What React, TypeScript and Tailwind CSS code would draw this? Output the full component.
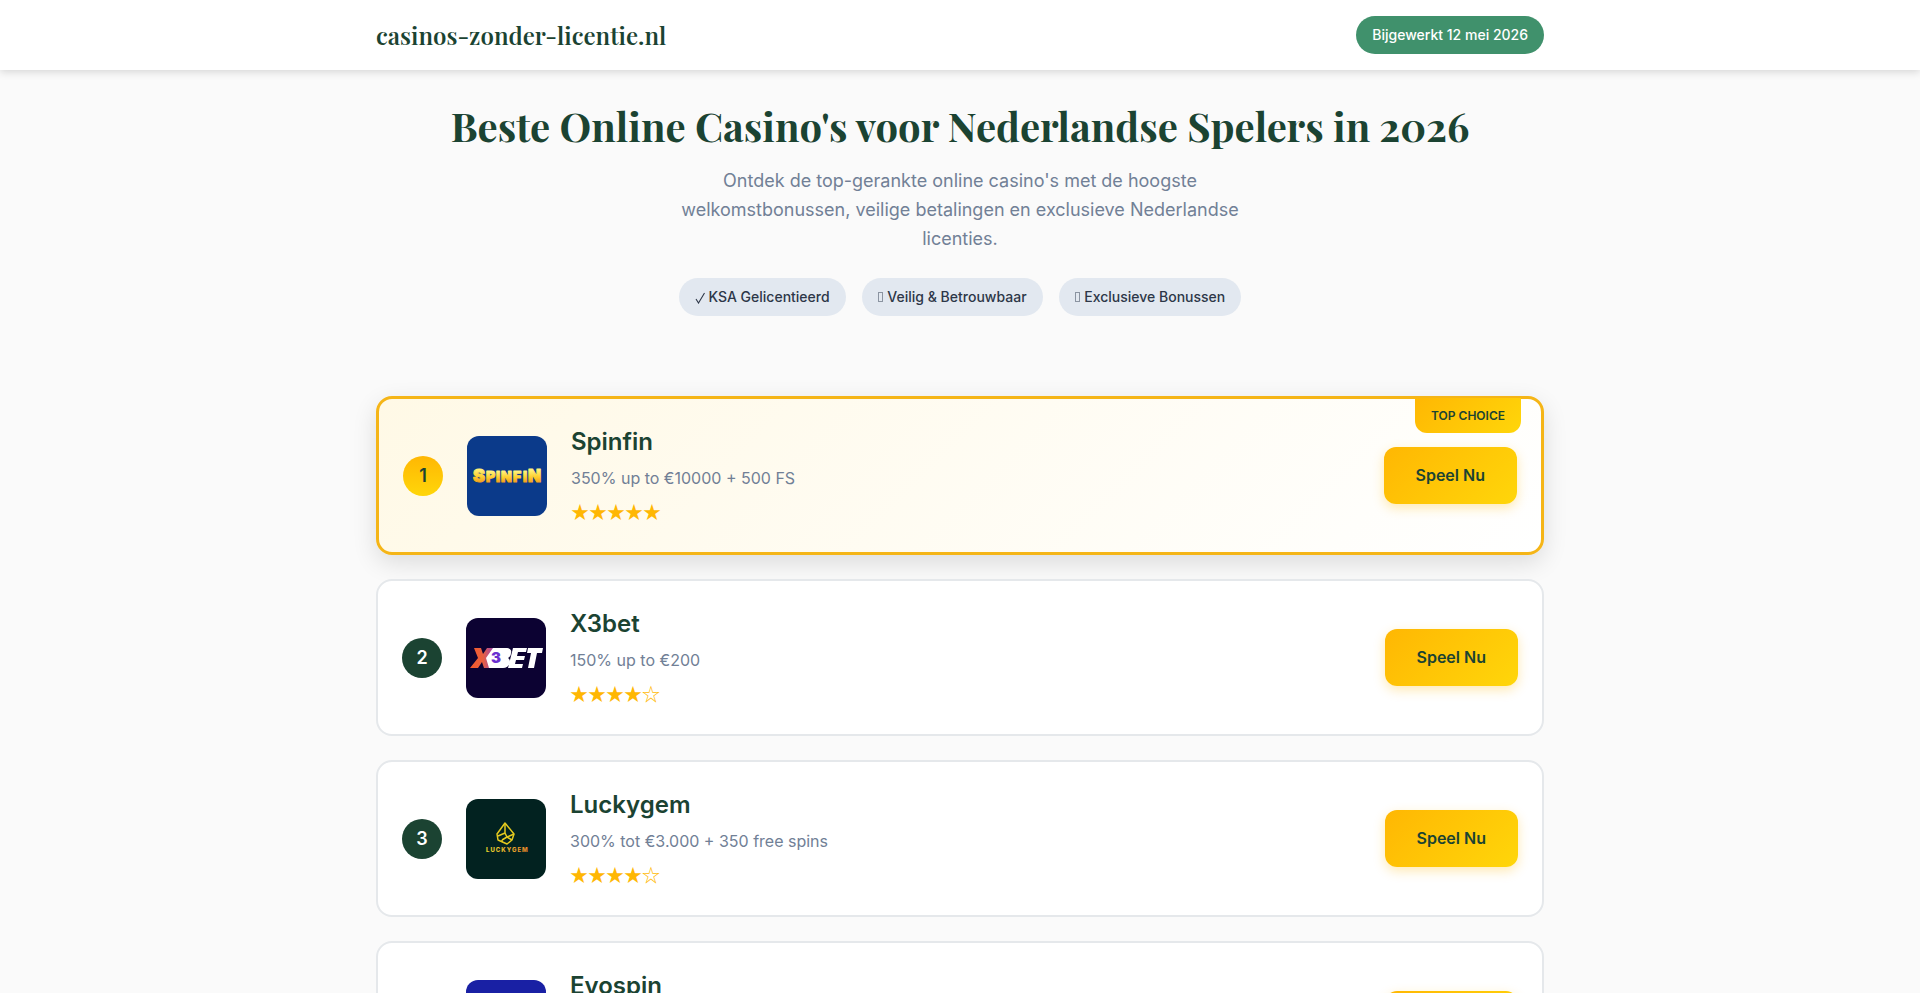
import type { ReactNode } from 'react';

interface Casino {
  rank: number;
  name: string;
  bonus: string;
  rating: number;
  logo: ReactNode;
}

function SpinfinLogo() {
  return (
    <svg viewBox="0 0 80 80" className="w-full h-full" role="img" aria-label="Spinfin logo">
      <defs>
        <linearGradient id="spinfin-gold" x1="0" y1="0" x2="0" y2="1">
          <stop offset="0.2" stopColor="#fff27a" />
          <stop offset="0.55" stopColor="#ffcf2e" />
          <stop offset="0.85" stopColor="#f39a1c" />
        </linearGradient>
      </defs>
      <rect width="80" height="80" fill="#0b3a8a" />
      <g
        fontFamily="Inter, sans-serif"
        fontWeight="900"
        fill="url(#spinfin-gold)"
        stroke="url(#spinfin-gold)"
        strokeWidth="1"
        strokeLinejoin="round"
      >
        <text x="6" y="46" fontSize="18">S</text>
        <text y="46" fontSize="14">
          <tspan x="19">P</tspan>
          <tspan x="29">I</tspan>
          <tspan x="34">N</tspan>
          <tspan x="46">F</tspan>
          <tspan x="56">I</tspan>
        </text>
        <text x="61" y="46" fontSize="17">N</text>
      </g>
    </svg>
  );
}

function X3betLogo() {
  return (
    <svg viewBox="0 0 80 80" className="w-full h-full" role="img" aria-label="X3bet logo">
      <defs>
        <linearGradient id="x3-flame" x1="0" y1="0" x2="1" y2="0">
          <stop offset="0" stopColor="#f4582a" />
          <stop offset="0.5" stopColor="#e8603f" />
          <stop offset="1" stopColor="#8c3fd0" />
        </linearGradient>
      </defs>
      <rect width="80" height="80" fill="#0c0232" />
      <path d="M8 30h7l2 6 4-6h9l-7 10 3 10h-8l-2-6-4 6H4l8-10z" fill="url(#x3-flame)" />
      <path d="M27 30h13c4 0 6 2 5 5 0 2-1 4-3 5 2 1 2 3 2 5-1 3-4 5-7 5H23l-3-10z" fill="#fff" />
      <text
        x="25"
        y="45"
        fontFamily="Inter, sans-serif"
        fontSize="15"
        fontWeight="900"
        fill="#6a2fd0"
      >
        3
      </text>
      <path d="M47 30h14l-1 4h-8l-1 4h8l-1 4h-8l-1 4h8l-1 4H42z" fill="#fff" />
      <path d="M62 30h15l-1 5h-5l-3 15h-6l3-15h-4z" fill="#fff" />
    </svg>
  );
}

function LuckygemLogo() {
  return (
    <svg viewBox="0 0 80 80" className="w-full h-full" role="img" aria-label="Luckygem logo">
      <defs>
        <linearGradient id="gem-gold" x1="0" y1="0" x2="1" y2="0">
          <stop offset="0" stopColor="#e9dc2c" />
          <stop offset="1" stopColor="#e8852a" />
        </linearGradient>
      </defs>
      <rect width="80" height="80" fill="#022220" />
      <g fill="none" stroke="#e3c91f" strokeWidth="1.5" strokeLinejoin="round">
        <path d="M39 24l9 11-2 6-5 4-9-4-1-6z" />
        <path d="M39 24v10l-7 3M39 34l2 4 7-3M41 38l-5 3M36 41v2M41 38l5 3" />
      </g>
      <text
        x="20"
        y="53"
        fontFamily="Inter, sans-serif"
        fontSize="6"
        fontWeight="800"
        letterSpacing="1"
        fill="url(#gem-gold)"
      >
        LUCKYGEM
      </text>
    </svg>
  );
}

const casinos: Casino[] = [
  { rank: 1, name: 'Spinfin', bonus: '350% up to €10000 + 500 FS', rating: 5, logo: <SpinfinLogo /> },
  { rank: 2, name: 'X3bet', bonus: '150% up to €200', rating: 4, logo: <X3betLogo /> },
  { rank: 3, name: 'Luckygem', bonus: '300% tot €3.000 + 350 free spins', rating: 4, logo: <LuckygemLogo /> },
  { rank: 4, name: 'Evospin', bonus: '100% up to €500', rating: 4, logo: <div className="w-full h-full bg-[#1920a4]" /> },
];

const trustBadges = [
  { label: 'KSA Gelicentieerd', checked: true },
  { label: 'Veilig & Betrouwbaar', checked: false },
  { label: 'Exclusieve Bonussen', checked: false },
];

function CheckMark() {
  return (
    <svg viewBox="0 0 10 12" className="inline-block w-[10px] h-3" aria-hidden="true">
      <path d="M1 7l2.500 4L9.500 1" fill="none" stroke="#2d3748" strokeWidth="1.100" />
    </svg>
  );
}

function CasinoCard({ rank, name, bonus, rating, logo }: Casino) {
  const isTop = rank === 1;

  return (
    <article
      className={`relative flex items-center gap-6 rounded-2xl p-6 ${
        isTop
          ? 'border-3 border-[#f5b517] bg-linear-135 from-[#fff9e6] to-white shadow-[0_8px_24px_rgba(0,0,0,0.12)]'
          : 'border-2 border-[#e5e8eb] bg-white'
      }`}
    >
      {isTop && (
        <span className="absolute -top-px right-5 px-4 py-2 rounded-b-xl bg-linear-135 from-[#ffb703] to-[#ffd60a] text-xs leading-[19px] font-semibold text-[#1b4332]">
          TOP CHOICE
        </span>
      )}
      <div
        className={`flex items-center justify-center flex-shrink-0 w-10 h-10 rounded-full text-lg font-semibold ${
          isTop ? 'bg-linear-180 from-[#ffb703] to-[#ffd60a] text-[#1b4332]' : 'bg-[#1b4332] text-white'
        }`}
      >
        {rank}
      </div>
      <div className="flex-shrink-0 w-20 h-20 rounded-xl overflow-hidden">{logo}</div>
      <div className="flex-1 min-w-0">
        <h2 className="mb-1 text-2xl leading-[38px] font-semibold text-[#1b4332]">{name}</h2>
        <p className="mb-1 text-base leading-[26px] text-[#718096]">{bonus}</p>
        <div
          className="font-['Noto_Sans_CJK_JP',sans-serif] text-lg leading-[33px] text-[#ffb703]"
          role="img"
          aria-label={`${rating} van 5 sterren`}
        >
          {'★'.repeat(rating)}
          {'☆'.repeat(5 - rating)}
        </div>
      </div>
      <a
        href="#"
        className="flex-shrink-0 px-8 py-4 rounded-xl bg-linear-135 from-[#ffb703] to-[#ffd60a] text-base leading-[25px] font-semibold text-[#1b4332] shadow-[0_4px_12px_rgba(255,183,3,0.3)]"
      >
        Speel Nu
      </a>
    </article>
  );
}

export default function App() {
  return (
    <div className="min-h-screen bg-[#fafafa] font-[Inter,sans-serif] text-[#2d3748]">
      <header className="relative bg-white shadow-[0_2px_8px_rgba(0,0,0,0.15)]">
        <div className="max-w-[1200px] mx-auto px-4 py-4 flex items-center justify-between">
          <a
            href="#"
            className="font-['Playfair_Display','Liberation_Serif',serif] text-2xl leading-[38px] font-semibold text-[#1b4332]"
          >
            casinos-zonder-licentie.nl
          </a>
          <span className="px-4 py-2 rounded-full bg-[#40916c] text-sm leading-[22px] font-medium text-white">
            Bijgewerkt 12 mei 2026
          </span>
        </div>
      </header>

      <main className="max-w-[1200px] mx-auto px-4">
        <section className="pt-8 pb-20 text-center">
          <h1 className="mb-4 font-['Playfair_Display','Liberation_Serif',serif] text-[40px] leading-[48px] font-bold text-[#1b4332]">
            Beste Online Casino's voor Nederlandse Spelers in 2026
          </h1>
          <p className="max-w-[600px] mx-auto mb-[25px] text-lg leading-[29px] text-[#718096]">
            Ontdek de top-gerankte online casino's met de hoogste welkomstbonussen, veilige
            betalingen en exclusieve Nederlandse licenties.
          </p>
          <div className="flex flex-wrap justify-center gap-4">
            {trustBadges.map(({ label, checked }) => (
              <span
                key={label}
                className="px-4 py-2 rounded-full bg-[#e2e8f0] text-sm leading-[22px] font-medium"
              >
                {checked ? (
                  <CheckMark />
                ) : (
                  <span className="inline-block w-[5px] h-[10px] mr-px border border-[#8b94a1]" />
                )}{' '}
                {label}
              </span>
            ))}
          </div>
        </section>

        <section className="flex flex-col gap-6 pb-12">
          {casinos.map((casino) => (
            <CasinoCard key={casino.rank} {...casino} />
          ))}
        </section>
      </main>
    </div>
  );
}
